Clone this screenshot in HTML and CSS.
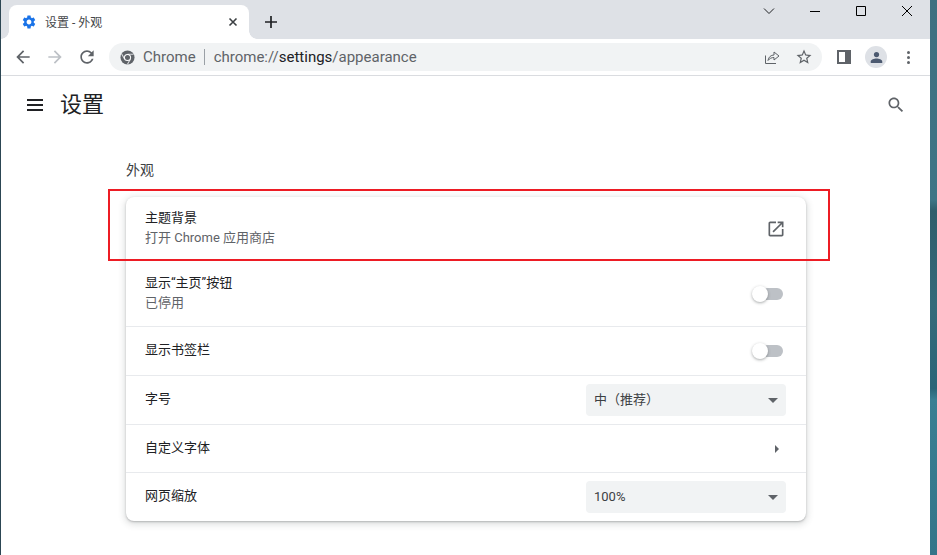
FILE: index.html
```html
<!DOCTYPE html>
<html lang="zh-CN">
<head>
<meta charset="utf-8">
<title>设置 - 外观</title>
<link rel="stylesheet" href="styles.css">
</head>
<body>
<div class="desktop">
  <div class="edge-left"></div>
  <main class="window">
    <header class="tabstrip">
      <div class="tab">
        <svg class="favicon" viewBox="0 0 24 24"><path fill="#1a73e8" d="M19.14 12.94c.04-.3.06-.61.06-.94 0-.32-.02-.64-.07-.94l2.03-1.58c.18-.14.23-.41.12-.61l-1.92-3.32c-.12-.22-.37-.29-.59-.22l-2.39.96c-.5-.38-1.03-.7-1.62-.94l-.36-2.54c-.04-.24-.24-.41-.48-.41h-3.84c-.24 0-.43.17-.47.41l-.36 2.54c-.59.24-1.13.57-1.62.94l-2.39-.96c-.22-.08-.47 0-.59.22L2.74 8.87c-.12.21-.08.47.12.61l2.03 1.58c-.05.3-.09.63-.09.94s.02.64.07.94l-2.03 1.58c-.18.14-.23.41-.12.61l1.92 3.32c.12.22.37.29.59.22l2.39-.96c.5.38 1.03.7 1.62.94l.36 2.54c.05.24.24.41.48.41h3.84c.24 0 .44-.17.47-.41l.36-2.54c.59-.24 1.13-.56 1.62-.94l2.39.96c.22.08.47 0 .59-.22l1.92-3.32c.12-.22.07-.47-.12-.61l-2.01-1.58zM12 15.6c-1.98 0-3.6-1.62-3.6-3.6s1.62-3.6 3.6-3.6 3.6 1.62 3.6 3.6-1.62 3.6-3.6 3.6z"/></svg>
        <span class="tab-title">设置 - 外观</span>
        <svg class="tab-close" viewBox="0 0 10 10"><path d="M1.5 1.5l7 7M8.5 1.5l-7 7" stroke="#3c4043" stroke-width="1.6" fill="none"/></svg>
      </div>
      <svg class="new-tab" viewBox="0 0 14 14"><path d="M7 1v12M1 7h12" stroke="#202124" stroke-width="1.7" fill="none"/></svg>
      <div class="window-controls">
        <svg class="ctl" viewBox="0 0 46 22"><path d="M18 8.500l5 5 5-5" stroke="#202124" fill="none"/></svg>
        <svg class="ctl" viewBox="0 0 46 22"><path d="M18 11.500h10" stroke="#000" fill="none"/></svg>
        <svg class="ctl" viewBox="0 0 46 22"><path d="M18.500 6.500h9v9h-9z" stroke="#000" fill="none"/></svg>
        <svg class="ctl" viewBox="0 0 46 22"><path d="M18 6l10 10M28 6L18 16" stroke="#000" fill="none"/></svg>
      </div>
    </header>

    <nav class="toolbar">
      <svg class="nav-icon" viewBox="0 0 24 24"><path fill="#5f6368" d="M20 11H7.830l5.590-5.590L12 4l-8 8 8 8 1.410-1.410L7.830 13H20v-2z"/></svg>
      <svg class="nav-icon" viewBox="0 0 24 24"><path fill="#bdc1c6" d="M4 11h12.170l-5.590-5.590L12 4l8 8-8 8-1.410-1.410L16.170 13H4v-2z"/></svg>
      <svg class="nav-icon" viewBox="0 0 24 24"><path fill="#5f6368" d="M17.650 6.350C16.200 4.900 14.210 4 12 4c-4.420 0-7.990 3.580-7.990 8s3.570 8 7.990 8c3.730 0 6.840-2.550 7.730-6h-2.080c-.82 2.330-3.040 4-5.650 4-3.310 0-6-2.690-6-6s2.690-6 6-6c1.660 0 3.140.69 4.220 1.780L13 11h7V4l-2.350 2.350z"/></svg>
      <div class="omnibox">
        <svg class="chrome-logo" viewBox="0 0 16 16">
          <circle cx="8" cy="8" r="7.500" fill="#5f6368"/>
          <path d="M8 4.500h6.500M5 9.800L1.800 4.200M11 9.800l-3.200 5.600" stroke="#d5d7da" stroke-width="1.200" fill="none"/>
          <circle cx="8" cy="8" r="3.800" fill="#fff"/>
          <circle cx="8" cy="8" r="2.700" fill="#5f6368"/>
        </svg>
        <span class="origin">Chrome</span>
        <span class="divider"></span>
        <span class="url">chrome://<b class="host">settings</b>/appearance</span>
        <svg class="omni-icon share" viewBox="0 0 16 16"><path d="M1.500 6.500v8h10.500M4 11.500c.5-3.500 3-5.500 6-5.500V3l5 4-5 4V8.500c-2.500 0-4.500 1-6 3z" stroke="#5f6368" stroke-width="1" fill="none"/></svg>
        <svg class="omni-icon star" viewBox="0 0 24 24"><path fill="#5f6368" d="M22 9.240l-7.190-.62L12 2 9.190 8.630 2 9.240l5.460 4.730L5.820 21 12 17.270 18.180 21l-1.630-7.030L22 9.240zM12 15.400l-3.760 2.270 1-4.280-3.320-2.880 4.380-.38L12 6.100l1.710 4.040 4.380.38-3.320 2.880 1 4.280L12 15.400z"/></svg>
      </div>
      <svg class="panel-icon" viewBox="0 0 14 14"><path fill="#5f6368" d="M0 0h14v14H0z"/><path fill="#fff" d="M2 2h6v10H2z"/></svg>
      <div class="avatar">
        <svg viewBox="0 0 14 14"><circle cx="7" cy="3.800" r="2.800" fill="#4c5a70"/><path d="M.8 13v-1.800C.8 9 4.500 8 7 8s6.200 1 6.200 3.200V13z" fill="#4c5a70"/></svg>
      </div>
      <div class="menu-dots"><i></i><i></i><i></i></div>
    </nav>

    <section class="page">
      <div class="page-header">
        <div class="hamburger"><i></i><i></i><i></i></div>
        <h1 class="page-title">设置</h1>
        <svg class="search" viewBox="0 0 24 24"><path fill="#5f6368" d="M15.500 14h-.79l-.28-.27C15.410 12.590 16 11.110 16 9.500 16 5.910 13.090 3 9.500 3S3 5.910 3 9.500 5.910 16 9.500 16c1.610 0 3.090-.59 4.230-1.570l.27.28v.79l5 4.990L20.490 19l-4.990-5zm-6 0C7.010 14 5 11.990 5 9.500S7.010 5 9.500 5 14 7.010 14 9.500 11.990 14 9.500 14z"/></svg>
      </div>
      <h2 class="section-title">外观</h2>
      <div class="card">
        <div class="row row-64">
          <div class="labels"><div class="label">主题背景</div><div class="sub">打开 Chrome 应用商店</div></div>
          <svg class="open-icon" viewBox="0 0 24 24"><path fill="#5f6368" d="M19 19H5V5h7V3H5c-1.110 0-2 .9-2 2v14c0 1.100.89 2 2 2h14c1.100 0 2-.9 2-2v-7h-2v7zM14 3v2h3.590l-9.830 9.830 1.410 1.410L19 6.410V10h2V3h-7z"/></svg>
        </div>
        <div class="row row-66">
          <div class="labels"><div class="label">显示“主页”按钮</div><div class="sub">已停用</div></div>
          <div class="toggle"><span class="knob"></span></div>
        </div>
        <div class="row row-49">
          <div class="labels"><div class="label">显示书签栏</div></div>
          <div class="toggle"><span class="knob"></span></div>
        </div>
        <div class="row row-49">
          <div class="labels"><div class="label">字号</div></div>
          <div class="select"><span class="select-text">中（推荐）</span><i class="caret"></i></div>
        </div>
        <div class="row row-48">
          <div class="labels"><div class="label">自定义字体</div></div>
          <i class="arrow-right"></i>
        </div>
        <div class="row row-48 last">
          <div class="labels"><div class="label">网页缩放</div></div>
          <div class="select"><span class="select-text">100%</span><i class="caret"></i></div>
        </div>
      </div>
      <div class="highlight"></div>
    </section>
  </main>
  <div class="edge-right"></div>
</div>
</body>
</html>
```

FILE: styles.css
```css
* { box-sizing: border-box; }
html, body { margin: 0; height: 100%; overflow: hidden; }
body {
  font-family: Roboto, "Noto Sans CJK SC", "Liberation Sans", sans-serif;
  font-size: 13px;
  color: #202124;
  background: #fff;
}
.desktop { display: flex; width: 937px; height: 555px; }
.edge-left { width: 1px; background: #2c4653; }
.edge-right {
  width: 7px;
  background: linear-gradient(#3f6f80 0, #3f7586 36%, #2f5d6b 38%, #356a7a 55%, #2a6578 70%, #3a7f93 72%, #347589 100%);
}
.window { position: relative; width: 929px; display: flex; flex-direction: column; }

/* tab strip */
.tabstrip {
  height: 39px;
  background: #dee1e6;
  display: flex;
  align-items: flex-start;
  padding-left: 8px;
}
.tab {
  position: relative;
  width: 240px;
  height: 34px;
  margin-top: 5px;
  background: #fff;
  border-radius: 8px 8px 0 0;
  display: flex;
  align-items: center;
  padding-left: 13px;
}
.tab::before, .tab::after {
  content: "";
  position: absolute;
  bottom: 0;
  width: 8px;
  height: 8px;
  background: radial-gradient(circle at 0 0, #dee1e6 7.500px, #fff 8px);
}
.tab::before { left: -8px; }
.tab::after { right: -8px; background: radial-gradient(circle at 100% 0, #dee1e6 7.500px, #fff 8px); }
.favicon { width: 16px; height: 16px; margin-left: -1px; }
.tab-title { margin: 2px 0 0 8px; font-size: 12px; color: #45474a; line-height: 16px; }
.tab-close { width: 10px; height: 10px; margin-left: auto; margin-right: 11px; }
.new-tab { width: 14px; height: 14px; margin: 15px 0 0 15px; }
.window-controls { margin-left: auto; display: flex; }
.ctl { width: 46px; height: 22px; display: block; }

/* toolbar */
.toolbar {
  height: 37px;
  border-bottom: 1px solid #dadce0;
  display: flex;
  align-items: flex-start;
  padding: 4px 0 0 12px;
}
.nav-icon { width: 20px; height: 20px; margin: 4px 12px 0 0; }
.omnibox {
  width: 713px;
  height: 28px;
  border-radius: 14px;
  background: #f1f3f4;
  display: flex;
  align-items: center;
  padding-left: 11px;
  font-family: Roboto, "Liberation Sans", sans-serif;
  font-size: 15px;
  color: #5f6368;
}
.chrome-logo { width: 15px; height: 15px; }
.origin { margin-left: 8px; }
.divider { width: 1px; height: 16px; background: #9aa0a6; margin: 0 9px 0 8px; }
.host { font-weight: 400; color: #202124; }
.omni-icon { display: block; }
.share { width: 16px; height: 16px; margin-left: auto; }
.star { width: 18px; height: 18px; margin: 0 9px 0 15px; }
.panel-icon { width: 14px; height: 14px; margin: 7px 0 0 15px; }
.avatar {
  width: 22px;
  height: 22px;
  margin: 3px 0 0 14px;
  border-radius: 50%;
  background: #dee1e6;
  display: flex;
  align-items: center;
  justify-content: center;
}
.avatar svg { width: 13px; height: 13px; }
.menu-dots { display: flex; flex-direction: column; gap: 2px; margin: 8px 0 0 20px; }
.menu-dots i { width: 3px; height: 3px; border-radius: 50%; background: #5f6368; display: block; }

/* page */
.page { flex: 1; padding: 0 124px 0 125px; }
.page-header {
  height: 58px;
  margin: 0 -124px 0 -125px;
  display: flex;
  align-items: center;
  padding: 0 24px 0 26px;
}
.hamburger { display: flex; flex-direction: column; gap: 3px; width: 16px; }
.hamburger i { display: block; height: 2px; background: #202124; }
.page-title { margin: 0 0 1px 17px; font-size: 22px; font-weight: 400; line-height: 30px; }
.search { width: 20px; height: 20px; margin: 0 0 1px auto; }
.section-title {
  margin: 26px 0 17px;
  font-size: 14px;
  font-weight: 400;
  line-height: 20px;
  height: 20px;
  color: #3c4043;
}
.card {
  width: 680px;
  border-radius: 8px;
  background: #fff;
  box-shadow: 0 1px 2px rgba(60,64,67,.3), 0 2px 6px 2px rgba(60,64,67,.15);
}
.row {
  display: flex;
  align-items: center;
  justify-content: space-between;
  padding: 0 20px 0 19px;
  border-bottom: 1px solid #e8eaed;
}
.row.last { border-bottom: 0; }
.row-64 { height: 64px; }
.row-66 { height: 66px; }
.row-49 { height: 49px; }
.row-48 { height: 48px; }
.labels { margin-bottom: 2px; }
.label { line-height: 20px; color: #202124; }
.sub { line-height: 20px; color: #5f6368; }
.open-icon { width: 20px; height: 20px; }
.toggle { width: 31px; height: 12px; display: flex; justify-content: flex-end; align-items: center; position: relative; margin-right: 3px; }
.toggle::before { content: ""; width: 28px; height: 12px; border-radius: 6px; background: #bdc1c6; }
.knob {
  position: absolute;
  left: 0;
  top: -2px;
  width: 16px;
  height: 16px;
  border-radius: 50%;
  background: #fff;
  box-shadow: 0 1px 3px rgba(60,64,67,.45);
}
.select {
  width: 200px;
  height: 32px;
  border-radius: 4px;
  background: #f1f3f4;
  display: flex;
  align-items: center;
  justify-content: space-between;
  padding: 0 8px;
  color: #3c4043;
}
.select-text { line-height: 20px; }
.caret {
  width: 0;
  height: 0;
  border: 5px solid transparent;
  border-top-color: #5f6368;
  border-bottom: 0;
}
.arrow-right {
  width: 0;
  height: 0;
  border: 4px solid transparent;
  border-left-color: #5f6368;
  border-right: 0;
  margin-right: 7px;
}
.highlight {
  position: absolute;
  left: 107px;
  top: 189px;
  width: 722px;
  height: 72px;
  border: 2px solid #ed1c24;
  pointer-events: none;
}
```
